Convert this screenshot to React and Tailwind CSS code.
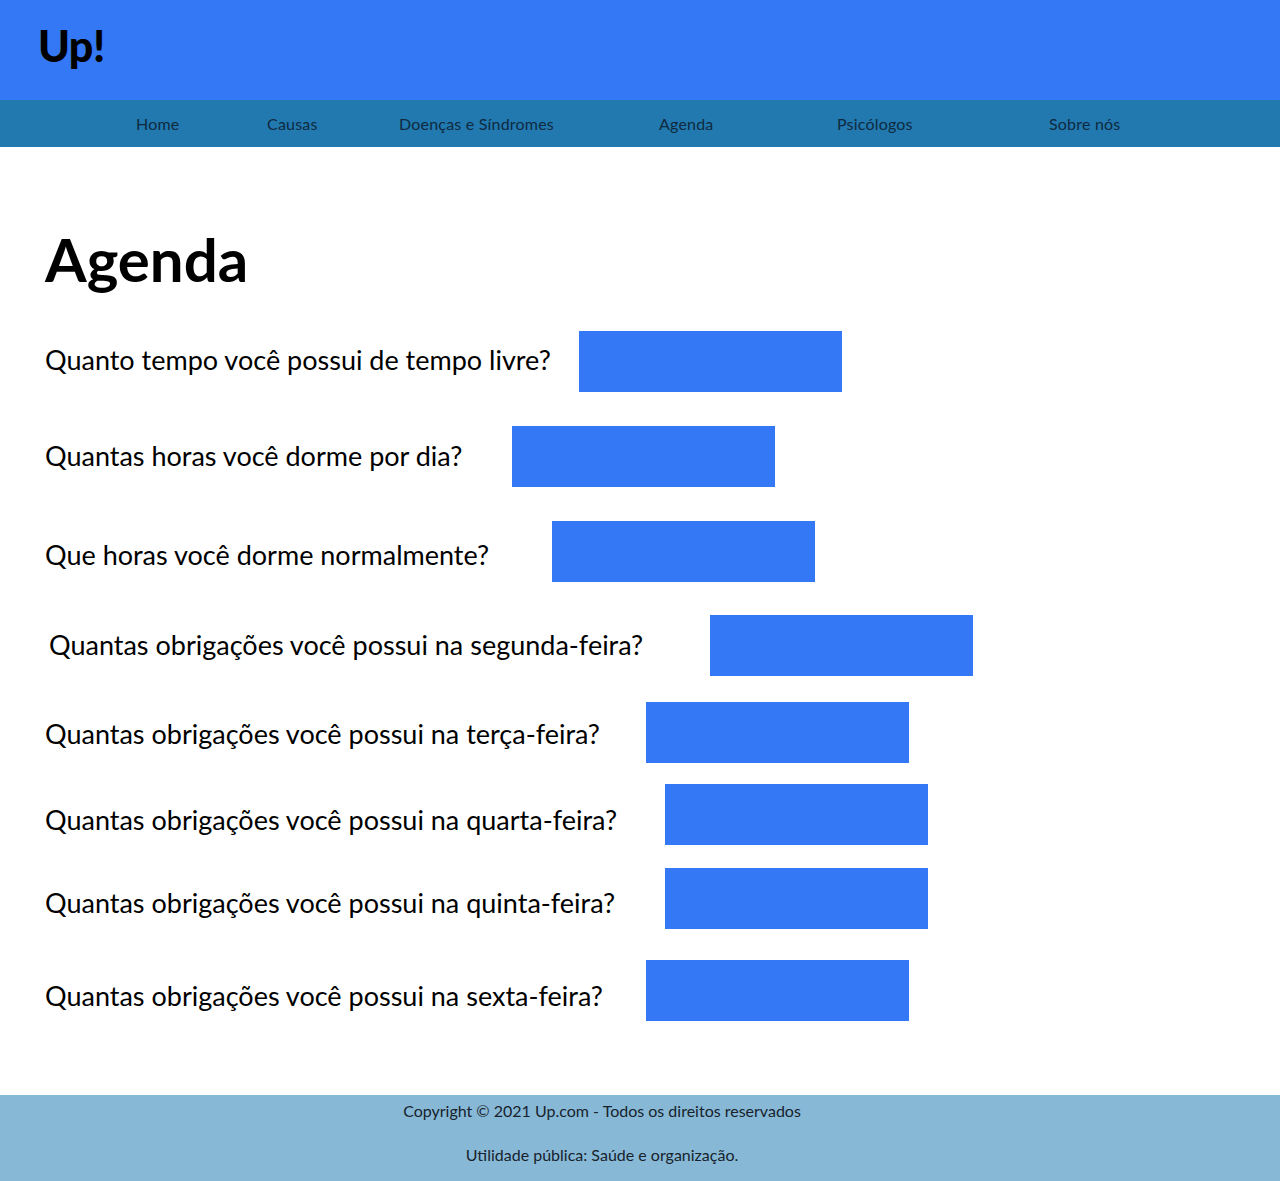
import React from "react";

const navItems = [
  { label: "Home", w: "w-[131px]" },
  { label: "Causas", w: "w-[132px]" },
  { label: "Doenças e Síndromes", w: "w-[260px]" },
  { label: "Agenda", w: "w-[178px]" },
  { label: "Psicólogos", w: "w-[212px]" },
  { label: "Sobre nós", w: "w-[120px]" },
];

// box positions in the original are uneven, so each row keeps its own text width
const questions = [
  { q: "Quanto tempo você possui de tempo livre?", textW: "w-[534px]", row: "h-[95px]", pl: "pl-[45px]", pb: "pb-[3px]" },
  { q: "Quantas horas você dorme por dia?", textW: "w-[467px]", row: "h-[95px]", pl: "pl-[45px]", pb: "pb-[1px]" },
  { q: "Que horas você dorme normalmente?", textW: "w-[507px]", row: "h-[94px]", pl: "pl-[45px]", pb: "pt-[7px]" },
  { q: "Quantas obrigações você possui na segunda-feira?", textW: "w-[661px]", row: "h-[87px]", pl: "pl-[49px]", pb: "pb-[1px]" },
  { q: "Quantas obrigações você possui na terça-feira?", textW: "w-[601px]", row: "h-[82px]", pl: "pl-[45px]", pb: "pt-[3px]" },
  { q: "Quantas obrigações você possui na quarta-feira?", textW: "w-[620px]", row: "h-[84px]", pl: "pl-[45px]", pb: "pt-[10px]" },
  { q: "Quantas obrigações você possui na quinta-feira?", textW: "w-[620px]", row: "h-[92px]", pl: "pl-[45px]", pb: "pt-[9px]" },
  { q: "Quantas obrigações você possui na sexta-feira?", textW: "w-[601px]", row: "h-[61px]", pl: "pl-[45px]", pb: "pt-[11px]" },
];

export default function App() {
  return (
    <div className="min-h-[1181px] flex flex-col bg-white font-['Lato','Noto_Sans',sans-serif] text-black">
      <header className="h-[100px] bg-[#3578f5] flex items-start pt-[22px] pl-[38px]">
        <span className="text-[43px] font-black leading-[48px] tracking-[-0.5px]">Up!</span>
      </header>

      <nav className="h-[47px] bg-[#2179b0] flex items-center pl-[136px] text-[16px] tracking-[0.2px] text-[#0f2a3f]">
        {navItems.map((item) => (
          <div key={item.label} className={`${item.w} shrink-0`}>
            {item.label}
          </div>
        ))}
      </nav>

      <main className="flex-1 pt-[80px]">
        <h1 className="pl-[45px] text-[60px] font-bold leading-[64px] mb-[40px]">Agenda</h1>

        <div className="flex flex-col">
          {questions.map((item) => (
            <div key={item.q} className={`flex items-start ${item.row} ${item.pl}`}>
              <div className={`${item.textW} ${item.pb} shrink-0 h-[61px] flex items-center text-[27px] leading-[30px]`}>
                {item.q}
              </div>
              <div className="w-[263px] h-[61px] bg-[#3578f5] shrink-0" />
            </div>
          ))}
        </div>
      </main>

      <footer className="h-[86px] bg-[#87b9d7] flex flex-col items-center pr-[76px] text-[16px] text-[#17222c] mt-[74px]">
        <p className="mt-[6px] leading-[20px]">Copyright © 2021 Up.com - Todos os direitos reservados</p>
        <p className="mt-[24px] leading-[20px]">Utilidade pública: Saúde e organização.</p>
      </footer>
    </div>
  );
}
